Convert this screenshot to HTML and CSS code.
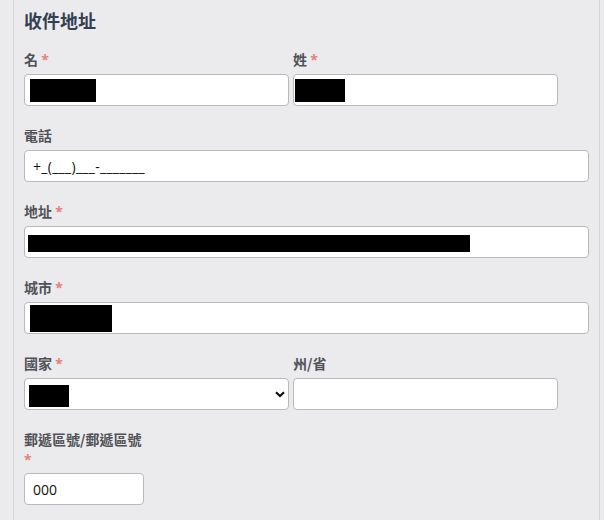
FILE: index.html
```html
<!DOCTYPE html>
<html lang="zh-Hant">
<head>
<meta charset="utf-8">
<title>收件地址</title>
<link rel="stylesheet" href="styles.css">
</head>
<body>
<div class="panel">
  <h2 class="title">收件地址</h2>

  <div class="row">
    <div class="field half">
      <label class="label">名 <span class="req">*</span></label>
      <div class="input"><span class="redact r-first"></span></div>
    </div>
    <div class="field half">
      <label class="label">姓 <span class="req">*</span></label>
      <div class="input"><span class="redact r-last"></span></div>
    </div>
  </div>

  <div class="field full">
    <label class="label">電話</label>
    <div class="input"><span class="value phone">+_(___)___-_______</span></div>
  </div>

  <div class="field full">
    <label class="label">地址 <span class="req">*</span></label>
    <div class="input"><span class="redact r-address"></span></div>
  </div>

  <div class="field full">
    <label class="label">城市 <span class="req">*</span></label>
    <div class="input"><span class="redact r-city"></span></div>
  </div>

  <div class="row">
    <div class="field half">
      <label class="label">國家 <span class="req">*</span></label>
      <div class="input select">
        <span class="redact r-country"></span>
        <svg class="chevron" width="10" height="7" viewBox="0 0 10 7"><path d="M1 1.2 L5 5 L9 1.2" fill="none" stroke="#111" stroke-width="2.2"/></svg>
      </div>
    </div>
    <div class="field half">
      <label class="label">州/省</label>
      <div class="input"></div>
    </div>
  </div>

  <div class="field small">
    <label class="label">郵遞區號/郵遞區號 <span class="req">*</span></label>
    <div class="input"><span class="value">000</span></div>
  </div>
</div>
</body>
</html>
```

FILE: styles.css
```css
html, body {
  margin: 0;
  padding: 0;
  background: #ebebee;
}

body {
  font-family: "Noto Sans CJK TC", "Noto Sans", sans-serif;
}

.panel {
  margin-left: 13px;
  width: 587px;
  min-height: 520px;
  box-sizing: border-box;
  border-left: 1px solid #d4d4d7;
  border-right: 1px solid #d4d4d7;
  padding: 9px 10px 0 10px;
}

.title {
  margin: 0 0 18px 0;
  font-size: 18px;
  line-height: 22px;
  font-weight: 700;
  color: #34404f;
}

.row {
  display: flex;
  gap: 4px;
}

.field {
  display: flex;
  flex-direction: column;
  margin-bottom: 19px;
}

.half { width: 265px; }
.full { width: 565px; }
.small { width: 120px; }

.label {
  display: block;
  font-size: 14px;
  line-height: 20px;
  font-weight: 700;
  color: #505257;
  margin-bottom: 5px;
}

.small .label {
  margin-bottom: 4px;
}

.req {
  color: #e8807a;
  font-family: "Open Sans", sans-serif;
  line-height: 0;
}

.input {
  position: relative;
  box-sizing: border-box;
  height: 32px;
  background: #fff;
  border: 1px solid #b9b9bc;
  border-radius: 4px;
  display: flex;
  align-items: center;
}

.value {
  font-family: "Open Sans", sans-serif;
  font-size: 14px;
  color: #111;
  padding-left: 8px;
}

.phone {
  letter-spacing: 0.3px;
}

.redact {
  display: block;
  background: #000;
}

.r-first { width: 66px; height: 23px; margin-left: 5px; margin-top: 1px; }
.r-last { width: 50px; height: 23px; margin-left: 1px; }
.r-address { width: 442px; height: 17px; margin-left: 3px; margin-top: 3px; }
.r-city { width: 82px; height: 27px; margin-left: 5px; }
.r-country { width: 40px; height: 22px; margin-left: 4px; margin-top: 3px; }

.select {
  justify-content: space-between;
}

.chevron {
  margin-right: 3px;
  margin-top: 1px;
}
```
